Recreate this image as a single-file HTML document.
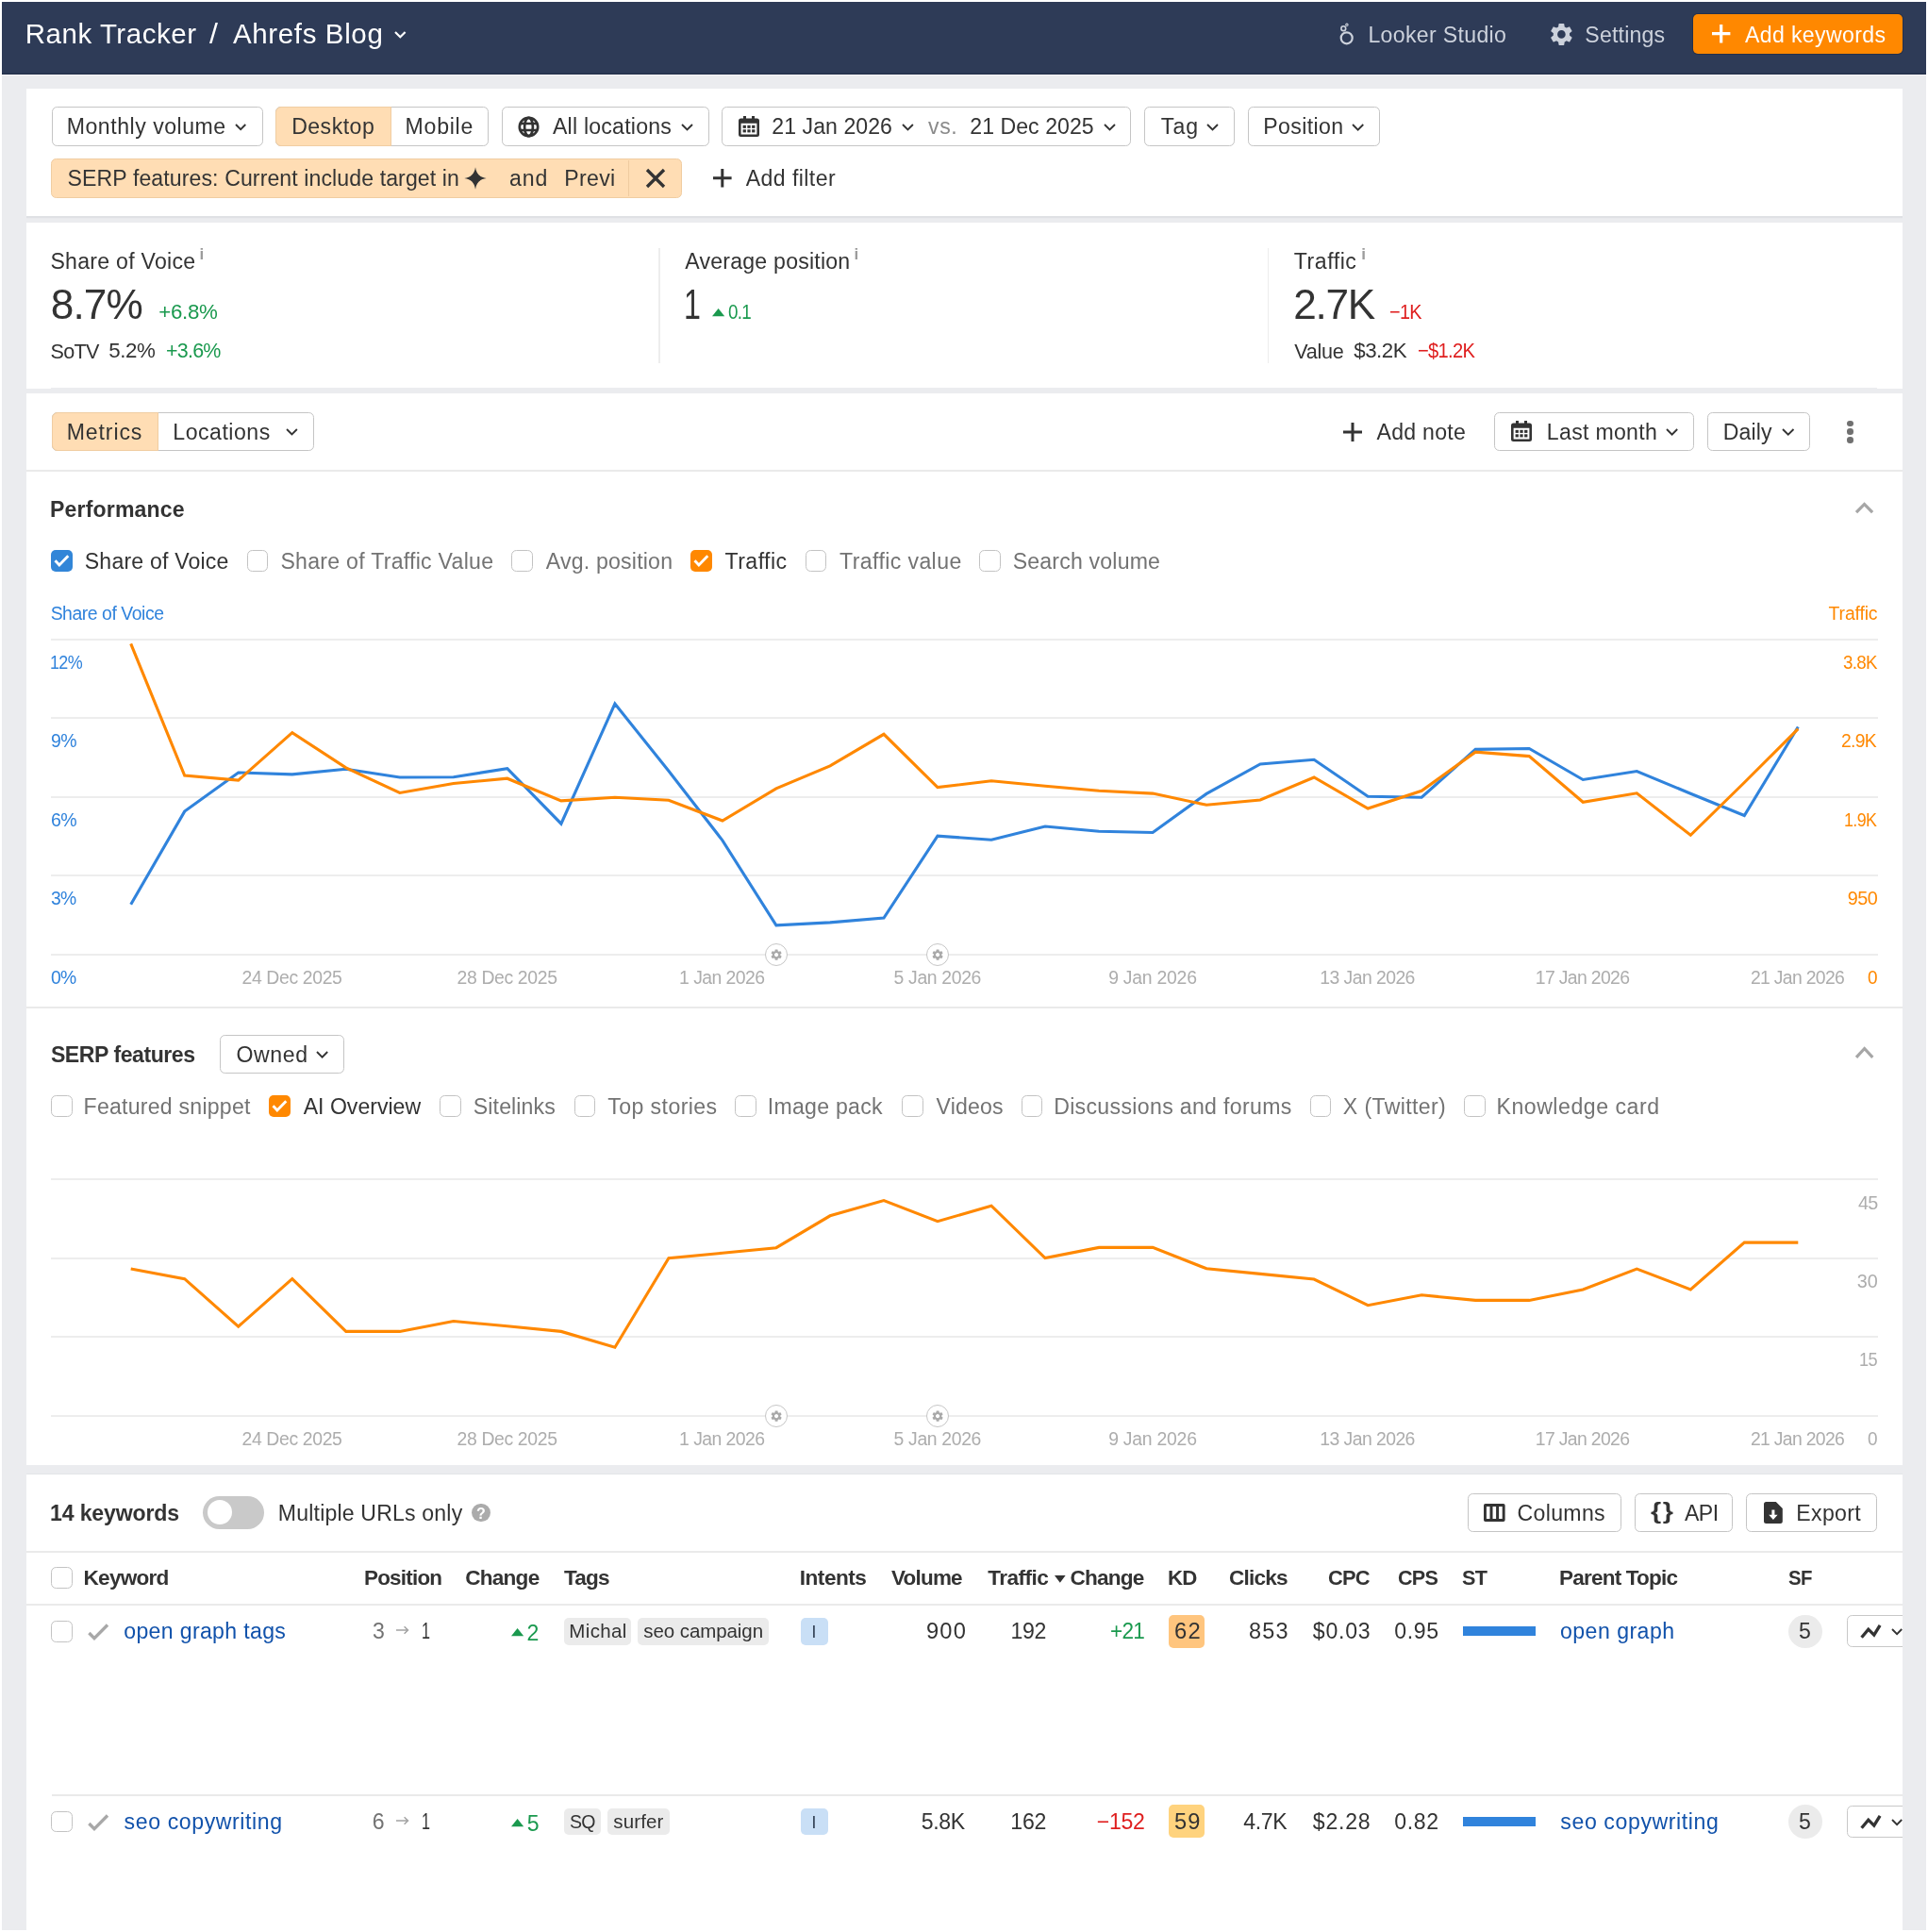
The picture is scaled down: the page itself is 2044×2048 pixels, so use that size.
<!DOCTYPE html>
<html lang="en"><head><meta charset="utf-8"><title>Rank Tracker / Ahrefs Blog</title>
<style>
html,body{margin:0;padding:0;background:#fff}
body{width:2044px;height:2048px;position:relative;overflow:hidden;font-family:"Liberation Sans",sans-serif}
#p{position:absolute;left:0;top:0;width:2044px;height:2048px;overflow:hidden;will-change:transform}
#p>div,#p>svg,#p>span{position:absolute;display:block}
#p>svg{overflow:visible}
.t{white-space:pre;line-height:1;transform-origin:0 50%}
</style></head>
<body><div id="p">
<div style="left:2.0px;top:2.0px;width:2040.0px;height:2044.0px;background:#ebecef"></div>
<div style="left:2.0px;top:2.0px;width:2040.0px;height:76.6px;background:#2e3b57;box-shadow:inset 0 -1.200px 0 #232f49"></div>
<div style="left:2.0px;top:78.6px;width:2040.0px;height:0.8px;background:#f6f6f8"></div>
<span class="t" id="t0" style="left:26.64px;top:20.73px;font-size:29.5px;color:#fff;letter-spacing:0.548px">Rank Tracker</span>
<span class="t" id="t1" style="left:222.00px;top:20.73px;font-size:29.5px;color:#fff;transform:scaleX(1.0886);letter-spacing:0.000px">/</span>
<span class="t" id="t2" style="left:247.00px;top:20.73px;font-size:29.5px;color:#fff;letter-spacing:0.630px">Ahrefs Blog</span>
<svg style="left:417.4px;top:31.9px" width="14.6" height="9.3" viewBox="0 0 14.600000000000023 9.300000000000011" ><path d="M2 2 L7.30 7.30 L12.60 2" fill="none" stroke="#fff" stroke-width="2.2" stroke-linecap="butt" stroke-linejoin="miter"/></svg>
<svg style="left:1416.0px;top:22.0px" width="24.0" height="28.0" viewBox="0 0 24 28" ><g fill="none" stroke="#cdd2dc"><circle cx="11.7" cy="18.3" r="6.0" stroke-width="2.2"/><circle cx="8.3" cy="8.2" r="2.4" stroke-width="1.6"/><circle cx="11.9" cy="4.3" r="1.2" stroke-width="1.1"/></g></svg>
<span class="t" id="t3" style="left:1450.45px;top:26.05px;font-size:23.1px;color:#cdd2dc;letter-spacing:0.332px">Looker Studio</span>
<svg style="left:1641.2px;top:22.0px" width="28.8" height="28.8" viewBox="0 0 24 24" ><path fill="#cdd2dc" d="M19.14,12.94c0.04-0.3,0.06-0.61,0.06-0.94c0-0.32-0.02-0.64-0.07-0.94l2.030-1.580c0.180-0.140,0.230-0.410,0.120-0.610 l-1.920-3.320c-0.120-0.220-0.370-0.290-0.590-0.220l-2.390,0.960c-0.500-0.380-1.030-0.700-1.620-0.940L14.400,2.810c-0.040-0.240-0.240-0.410-0.480-0.410 h-3.840c-0.240,0-0.430,0.170-0.470,0.410L9.250,5.350C8.660,5.590,8.120,5.920,7.630,6.290L5.240,5.330c-0.220-0.080-0.470,0-0.590,0.220L2.740,8.870 C2.620,9.080,2.660,9.340,2.860,9.480l2.030,1.580C4.840,11.360,4.800,11.690,4.800,12s0.020,0.640,0.070,0.940l-2.030,1.580 c-0.180,0.140-0.230,0.410-0.120,0.610l1.920,3.320c0.120,0.220,0.370,0.290,0.590,0.220l2.390-0.960c0.500,0.380,1.030,0.700,1.620,0.940l0.360,2.540 c0.050,0.240,0.240,0.410,0.480,0.410h3.840c0.240,0,0.440-0.170,0.470-0.410l0.360-2.540c0.590-0.240,1.130-0.560,1.620-0.940l2.390,0.960 c0.220,0.080,0.470,0,0.590-0.220l1.920-3.320c0.120-0.220,0.070-0.470-0.120-0.610L19.140,12.940z M12,15.600c-1.980,0-3.600-1.620-3.600-3.600 s1.620-3.600,3.600-3.600s3.600,1.620,3.600,3.600S13.980,15.600,12,15.600z"/></svg>
<span class="t" id="t4" style="left:1680.36px;top:26.05px;font-size:23.1px;color:#cdd2dc;letter-spacing:0.185px">Settings</span>
<div style="left:1794.9px;top:14.7px;width:221.9px;height:42.6px;background:#ff8800;border-radius:5px;box-shadow:0 0 0 1px rgba(20,28,50,.35)"></div>
<svg style="left:1814.6px;top:26.3px" width="19.4" height="19.4" viewBox="0 0 19.40000000000009 19.40000000000009" ><path d="M0 9.70 H19.40 M9.70 0 V19.40" stroke="#fff" stroke-width="3.2" fill="none"/></svg>
<span class="t" id="t5" style="left:1850.00px;top:26.05px;font-size:23.1px;color:#fff;letter-spacing:0.360px">Add keywords</span>
<div style="left:28.0px;top:93.5px;width:1988.5px;height:135.4px;background:#fff;box-shadow:0 2.2px 0 #dfe1e4"></div>
<div style="left:54.5px;top:113.3px;width:224.0px;height:41.5px;border:1.7px solid #c5c5c5;border-radius:5.5px;background:#fff;box-sizing:border-box;"></div>
<span class="t" id="t6" style="left:70.75px;top:123.25px;font-size:23.1px;color:#333333;letter-spacing:0.513px">Monthly volume</span>
<svg style="left:248.0px;top:130.2px" width="14.3" height="9.2" viewBox="0 0 14.300000000000011 9.150000000000006" ><path d="M2 2 L7.15 7.15 L12.30 2" fill="none" stroke="#333333" stroke-width="1.9" stroke-linecap="butt" stroke-linejoin="miter"/></svg>
<div style="left:292.3px;top:113.3px;width:226.2px;height:41.5px;border:1.7px solid #c5c5c5;border-radius:5.5px;background:#fff;box-sizing:border-box;"></div>
<div style="left:292.3px;top:113.3px;width:122.3px;height:41.5px;background:#ffddb4;border:1.7px solid #f0cda2;box-sizing:border-box;border-radius:6px 0 0 6px"></div>
<span class="t" id="t7" style="left:309.15px;top:123.25px;font-size:23.1px;color:#333333;letter-spacing:0.480px">Desktop</span>
<span class="t" id="t8" style="left:429.55px;top:123.25px;font-size:23.1px;color:#333333;letter-spacing:0.754px">Mobile</span>
<div style="left:532.0px;top:113.3px;width:219.6px;height:41.5px;border:1.7px solid #c5c5c5;border-radius:5.5px;background:#fff;box-sizing:border-box;"></div>
<svg style="left:549.2px;top:123.3px" width="23.0" height="23.0" viewBox="0 0 23 23" ><g fill="none" stroke="#333" stroke-width="2.7"><circle cx="11.5" cy="11.5" r="9.7"/><ellipse cx="11.5" cy="11.5" rx="4.4" ry="9.7"/><path d="M2.200 8h18.600M2.200 15h18.600"/></g></svg>
<span class="t" id="t9" style="left:586.00px;top:123.25px;font-size:23.1px;color:#333333;letter-spacing:0.215px">All locations</span>
<svg style="left:720.6px;top:130.1px" width="15.0" height="9.5" viewBox="0 0 15.0 9.5" ><path d="M2 2 L7.50 7.50 L13.00 2" fill="none" stroke="#333333" stroke-width="1.9" stroke-linecap="butt" stroke-linejoin="miter"/></svg>
<div style="left:765.4px;top:113.3px;width:433.9px;height:41.5px;border:1.7px solid #c5c5c5;border-radius:5.5px;background:#fff;box-sizing:border-box;"></div>
<svg style="left:783.0px;top:122.8px" width="22.0" height="22.0" viewBox="0 0 22 22" ><path fill="#333333" fill-rule="evenodd" d="M5 0h3v2.5h6V0h3v2.5h2.5A2.5 2.5 0 0 1 22 5v14.5a2.5 2.5 0 0 1-2.5 2.5h-17A2.5 2.5 0 0 1 0 19.500V5a2.5 2.500 0 0 1 2.5-2.5H5z M2.600 7.800v11.600h16.800V7.800z"/><g fill="#333333"><rect x="4.600" y="9.800" width="3.300" height="3.100"/><rect x="9.350" y="9.800" width="3.300" height="3.100"/><rect x="14.100" y="9.800" width="3.300" height="3.100"/><rect x="4.600" y="14.300" width="3.300" height="3.100"/><rect x="9.350" y="14.300" width="3.300" height="3.100"/><rect x="14.100" y="14.300" width="3.300" height="3.100"/></g></svg>
<span class="t" id="t10" style="left:818.35px;top:123.25px;font-size:23.1px;color:#333333;letter-spacing:0.047px">21 Jan 2026</span>
<svg style="left:954.8px;top:130.1px" width="14.9" height="9.5" viewBox="0 0 14.900000000000091 9.450000000000045" ><path d="M2 2 L7.45 7.45 L12.90 2" fill="none" stroke="#333333" stroke-width="1.9" stroke-linecap="butt" stroke-linejoin="miter"/></svg>
<span class="t" id="t11" style="left:984.00px;top:123.25px;font-size:23.1px;color:#8a8a8a;letter-spacing:0.606px">vs.</span>
<span class="t" id="t12" style="left:1028.25px;top:123.25px;font-size:23.1px;color:#333333;letter-spacing:0.044px">21 Dec 2025</span>
<svg style="left:1168.5px;top:130.1px" width="15.0" height="9.5" viewBox="0 0 15.0 9.5" ><path d="M2 2 L7.50 7.50 L13.00 2" fill="none" stroke="#333333" stroke-width="1.9" stroke-linecap="butt" stroke-linejoin="miter"/></svg>
<div style="left:1213.2px;top:113.3px;width:95.8px;height:41.5px;border:1.7px solid #c5c5c5;border-radius:5.5px;background:#fff;box-sizing:border-box;"></div>
<span class="t" id="t13" style="left:1230.84px;top:123.25px;font-size:23.1px;color:#333333;letter-spacing:1.020px">Tag</span>
<svg style="left:1278.0px;top:130.1px" width="15.0" height="9.5" viewBox="0 0 15 9.5" ><path d="M2 2 L7.50 7.50 L13.00 2" fill="none" stroke="#333333" stroke-width="1.9" stroke-linecap="butt" stroke-linejoin="miter"/></svg>
<div style="left:1322.8px;top:113.3px;width:140.6px;height:41.5px;border:1.7px solid #c5c5c5;border-radius:5.5px;background:#fff;box-sizing:border-box;"></div>
<span class="t" id="t14" style="left:1339.15px;top:123.25px;font-size:23.1px;color:#333333;letter-spacing:0.398px">Position</span>
<svg style="left:1432.0px;top:130.0px" width="15.3" height="9.6" viewBox="0 0 15.299999999999955 9.649999999999977" ><path d="M2 2 L7.65 7.65 L13.30 2" fill="none" stroke="#333333" stroke-width="1.9" stroke-linecap="butt" stroke-linejoin="miter"/></svg>
<div style="left:54.3px;top:168.2px;width:669.0px;height:41.4px;background:#ffddb4;border:1.7px solid #f0cda2;box-sizing:border-box;border-radius:5.5px"></div>
<div style="left:665.8px;top:169.5px;width:1.6px;height:38.5px;background:#efcba0"></div>
<span class="t" id="t15" style="left:71.56px;top:178.25px;font-size:23.1px;color:#333333;letter-spacing:0.095px">SERP features: Current include target in</span>
<svg style="left:491.5px;top:177.0px" width="24.0" height="24.0" viewBox="0 0 24 24" ><path fill="#333" d="M12 0.300 C12.900 7.200 16.800 11.100 23.700 12 C16.800 12.900 12.900 16.800 12 23.700 C11.100 16.800 7.200 12.900 0.300 12 C7.200 11.100 11.100 7.200 12 0.300Z"/></svg>
<span class="t" id="t16" style="left:540.08px;top:178.25px;font-size:23.1px;color:#333333;letter-spacing:0.903px">and</span>
<span class="t" id="t17" style="left:598.15px;top:178.25px;font-size:23.1px;color:#333333;letter-spacing:0.369px">Previ</span>
<svg style="left:684.0px;top:178.0px" width="22.0" height="22.0" viewBox="0 0 22 22" ><path d="M2 2 L20 20 M20 2 L2 20" stroke="#333" stroke-width="3.3" fill="none"/></svg>
<svg style="left:756.4px;top:179.2px" width="19.6" height="19.6" viewBox="0 0 19.600000000000023 19.600000000000023" ><path d="M0 9.80 H19.60 M9.80 0 V19.60" stroke="#333333" stroke-width="3.0" fill="none"/></svg>
<span class="t" id="t18" style="left:790.80px;top:178.25px;font-size:23.1px;color:#333333;letter-spacing:0.407px">Add filter</span>
<div style="left:28.0px;top:236.3px;width:1988.5px;height:175.9px;background:#fff"></div>
<div style="left:54.3px;top:410.9px;width:1936.2px;height:1.3px;background:#ebecef"></div>
<span class="t" id="t19" style="left:53.46px;top:266.15px;font-size:23.1px;color:#333333;letter-spacing:0.267px">Share of Voice</span>
<span class="t" id="t20" style="left:211.50px;top:261.01px;font-size:17px;color:#9c9c9c;font-weight:700;letter-spacing:0.000px">i</span>
<span class="t" id="t21" style="left:53.73px;top:301.38px;font-size:44.2px;color:#333333;letter-spacing:-0.881px">8.7%</span>
<span class="t" id="t22" style="left:168.20px;top:319.92px;font-size:22.3px;color:#1a994e;letter-spacing:-0.270px">+6.8%</span>
<span class="t" id="t23" style="left:53.53px;top:361.52px;font-size:21.6px;color:#333333;letter-spacing:-0.733px">SoTV</span>
<span class="t" id="t24" style="left:115.31px;top:360.92px;font-size:22.3px;color:#333333;letter-spacing:-0.425px">5.2%</span>
<span class="t" id="t25" style="left:175.83px;top:360.92px;font-size:22.3px;color:#1a994e;transform:scaleX(0.9617);letter-spacing:-0.781px">+3.6%</span>
<div style="left:698.0px;top:262.5px;width:1.6px;height:122.0px;background:#ededed"></div>
<span class="t" id="t26" style="left:726.30px;top:266.15px;font-size:23.1px;color:#333333;letter-spacing:0.219px">Average position</span>
<span class="t" id="t27" style="left:905.60px;top:261.01px;font-size:17px;color:#9c9c9c;font-weight:700;letter-spacing:0.000px">i</span>
<span class="t" id="t28" style="left:724.59px;top:301.38px;font-size:44.2px;color:#333333;transform:scaleX(0.7283);letter-spacing:0.000px">1</span>
<svg style="left:755.3px;top:327.0px" width="13.2" height="8.2" viewBox="0 0 13.2 8.2" ><path d="M0 8.200 L6.600 0 L13.200 8.200Z" fill="#1a994e"/></svg>
<span class="t" id="t29" style="left:772.04px;top:319.92px;font-size:22.3px;color:#1a994e;transform:scaleX(0.8433);letter-spacing:-0.781px">0.1</span>
<div style="left:1343.7px;top:262.5px;width:1.6px;height:122.0px;background:#ededed"></div>
<span class="t" id="t30" style="left:1371.84px;top:266.15px;font-size:23.1px;color:#333333;letter-spacing:0.525px">Traffic</span>
<span class="t" id="t31" style="left:1443.30px;top:261.01px;font-size:17px;color:#9c9c9c;font-weight:700;letter-spacing:0.000px">i</span>
<span class="t" id="t32" style="left:1371.29px;top:301.38px;font-size:44.2px;color:#333333;letter-spacing:-1.295px">2.7K</span>
<span class="t" id="t33" style="left:1473.11px;top:319.92px;font-size:22.3px;color:#df1f1f;transform:scaleX(0.8889);letter-spacing:-0.781px">−1K</span>
<span class="t" id="t34" style="left:1372.30px;top:361.52px;font-size:21.6px;color:#333333;letter-spacing:-0.288px">Value</span>
<span class="t" id="t35" style="left:1435.28px;top:360.92px;font-size:22.3px;color:#333333;letter-spacing:-0.500px">$3.2K</span>
<span class="t" id="t36" style="left:1502.89px;top:360.92px;font-size:22.3px;color:#df1f1f;transform:scaleX(0.9044);letter-spacing:-0.781px">−$1.2K</span>
<div style="left:28.0px;top:416.8px;width:1988.5px;height:1135.8px;background:#fff"></div>
<div style="left:54.5px;top:436.6px;width:278.1px;height:41.4px;border:1.7px solid #c5c5c5;border-radius:5.5px;background:#fff;box-sizing:border-box;"></div>
<div style="left:54.5px;top:436.6px;width:113.1px;height:41.4px;background:#ffddb4;border:1.7px solid #f0cda2;box-sizing:border-box;border-radius:6px 0 0 6px"></div>
<span class="t" id="t37" style="left:70.75px;top:446.55px;font-size:23.1px;color:#333333;letter-spacing:0.872px">Metrics</span>
<span class="t" id="t38" style="left:183.35px;top:446.55px;font-size:23.1px;color:#333333;letter-spacing:0.500px">Locations</span>
<svg style="left:301.6px;top:453.1px" width="14.9" height="9.4" viewBox="0 0 14.899999999999977 9.449999999999989" ><path d="M2 2 L7.45 7.45 L12.90 2" fill="none" stroke="#333333" stroke-width="1.9" stroke-linecap="butt" stroke-linejoin="miter"/></svg>
<svg style="left:1423.9px;top:447.6px" width="20.0" height="20.0" viewBox="0 0 20.0 20.0" ><path d="M0 10.00 H20.00 M10.00 0 V20.00" stroke="#333333" stroke-width="3.0" fill="none"/></svg>
<span class="t" id="t39" style="left:1459.50px;top:446.55px;font-size:23.1px;color:#333333;letter-spacing:0.255px">Add note</span>
<div style="left:1584.4px;top:436.6px;width:212.0px;height:41.4px;border:1.7px solid #c5c5c5;border-radius:5.5px;background:#fff;box-sizing:border-box;"></div>
<svg style="left:1601.8px;top:446.0px" width="22.0" height="22.0" viewBox="0 0 22 22" ><path fill="#333333" fill-rule="evenodd" d="M5 0h3v2.5h6V0h3v2.5h2.5A2.5 2.5 0 0 1 22 5v14.5a2.5 2.5 0 0 1-2.5 2.5h-17A2.5 2.5 0 0 1 0 19.500V5a2.5 2.500 0 0 1 2.5-2.5H5z M2.600 7.800v11.600h16.800V7.800z"/><g fill="#333333"><rect x="4.600" y="9.800" width="3.300" height="3.100"/><rect x="9.350" y="9.800" width="3.300" height="3.100"/><rect x="14.100" y="9.800" width="3.300" height="3.100"/><rect x="4.600" y="14.300" width="3.300" height="3.100"/><rect x="9.350" y="14.300" width="3.300" height="3.100"/><rect x="14.100" y="14.300" width="3.300" height="3.100"/></g></svg>
<span class="t" id="t40" style="left:1639.85px;top:446.55px;font-size:23.1px;color:#333333;letter-spacing:0.299px">Last month</span>
<svg style="left:1765.4px;top:453.0px" width="15.2" height="9.6" viewBox="0 0 15.199999999999818 9.599999999999909" ><path d="M2 2 L7.60 7.60 L13.20 2" fill="none" stroke="#333333" stroke-width="1.9" stroke-linecap="butt" stroke-linejoin="miter"/></svg>
<div style="left:1810.2px;top:436.6px;width:109.0px;height:41.4px;border:1.7px solid #c5c5c5;border-radius:5.5px;background:#fff;box-sizing:border-box;"></div>
<span class="t" id="t41" style="left:1826.85px;top:446.55px;font-size:23.1px;color:#333333;letter-spacing:0.076px">Daily</span>
<svg style="left:1887.7px;top:452.9px" width="15.5" height="9.8" viewBox="0 0 15.5 9.75" ><path d="M2 2 L7.75 7.75 L13.50 2" fill="none" stroke="#333333" stroke-width="1.9" stroke-linecap="butt" stroke-linejoin="miter"/></svg>
<div style="left:1958.0px;top:445.5px;width:6.6px;height:6.6px;background:#707070;border-radius:50%"></div>
<div style="left:1958.0px;top:454.3px;width:6.6px;height:6.6px;background:#707070;border-radius:50%"></div>
<div style="left:1958.0px;top:463.1px;width:6.6px;height:6.6px;background:#707070;border-radius:50%"></div>
<div style="left:28.0px;top:497.5px;width:1988.5px;height:2.0px;background:#eaeaea"></div>
<span class="t" id="t42" style="left:53.00px;top:529.05px;font-size:23.1px;color:#333333;font-weight:700;letter-spacing:0.152px">Performance</span>
<svg style="left:1963.6px;top:530.0px" width="25.1" height="17.2" viewBox="0 0 25.100000000000136 17.200000000000045" ><path d="M4 13.20 L12.55 4.5 L21.10 13.20" fill="none" stroke="#a6a6a6" stroke-width="3.2" stroke-linejoin="miter"/></svg>
<div style="left:54.2px;top:583.3px;width:22.8px;height:22.8px;border-radius:5px;background:#3286d8"></div>
<svg style="left:54.2px;top:583.3px" width="22.8" height="22.8" viewBox="0 0 22.8 22.8" ><path d="M4.5 11.3 L8.900 15.9 L18.300 6.300" fill="none" stroke="#fff" stroke-width="2.9" stroke-linejoin="miter"/></svg>
<span class="t" id="t43" style="left:89.76px;top:584.45px;font-size:23.1px;color:#333333;letter-spacing:0.190px">Share of Voice</span>
<div style="left:261.5px;top:583.3px;width:22.8px;height:22.8px;border:1.7px solid #c3c3c3;border-radius:5.5px;background:#fff;box-sizing:border-box"></div>
<span class="t" id="t44" style="left:297.46px;top:584.45px;font-size:23.1px;color:#737373;letter-spacing:0.268px">Share of Traffic Value</span>
<div style="left:542.1px;top:583.3px;width:22.8px;height:22.8px;border:1.7px solid #c3c3c3;border-radius:5.5px;background:#fff;box-sizing:border-box"></div>
<span class="t" id="t45" style="left:578.80px;top:584.45px;font-size:23.1px;color:#737373;letter-spacing:0.200px">Avg. position</span>
<div style="left:731.8px;top:583.3px;width:22.8px;height:22.8px;border-radius:5px;background:#ff8800"></div>
<svg style="left:731.8px;top:583.3px" width="22.8" height="22.8" viewBox="0 0 22.8 22.8" ><path d="M4.5 11.3 L8.900 15.9 L18.300 6.300" fill="none" stroke="#fff" stroke-width="2.9" stroke-linejoin="miter"/></svg>
<span class="t" id="t46" style="left:768.44px;top:584.45px;font-size:23.1px;color:#333333;letter-spacing:0.475px">Traffic</span>
<div style="left:853.7px;top:583.3px;width:22.8px;height:22.8px;border:1.7px solid #c3c3c3;border-radius:5.5px;background:#fff;box-sizing:border-box"></div>
<span class="t" id="t47" style="left:890.04px;top:584.45px;font-size:23.1px;color:#737373;letter-spacing:0.391px">Traffic value</span>
<div style="left:1038.4px;top:583.3px;width:22.8px;height:22.8px;border:1.7px solid #c3c3c3;border-radius:5.5px;background:#fff;box-sizing:border-box"></div>
<span class="t" id="t48" style="left:1073.66px;top:584.45px;font-size:23.1px;color:#737373;letter-spacing:0.187px">Search volume</span>
<span class="t" id="t49" style="left:53.63px;top:640.68px;font-size:19.4px;color:#3083dc;letter-spacing:-0.443px">Share of Voice</span>
<span class="t" id="t50" style="left:1938.61px;top:640.68px;font-size:19.4px;color:#ff8800;letter-spacing:-0.154px">Traffic</span>
<div style="left:54.2px;top:676.9px;width:1936.6px;height:2.0px;background:#ededed"></div>
<div style="left:54.2px;top:760.3px;width:1936.6px;height:2.0px;background:#ededed"></div>
<div style="left:54.2px;top:843.8px;width:1936.6px;height:2.0px;background:#ededed"></div>
<div style="left:54.2px;top:927.2px;width:1936.6px;height:2.0px;background:#ededed"></div>
<div style="left:54.2px;top:1010.6px;width:1936.6px;height:2.0px;background:#ededed"></div>
<span class="t" id="t51" style="left:53.25px;top:692.99px;font-size:19.8px;color:#3083dc;transform:scaleX(0.9072);letter-spacing:-0.693px">12%</span>
<span class="t" id="t52" style="left:53.72px;top:776.44px;font-size:19.8px;color:#3083dc;transform:scaleX(0.9835);letter-spacing:-0.693px">9%</span>
<span class="t" id="t53" style="left:53.62px;top:859.89px;font-size:19.8px;color:#3083dc;transform:scaleX(0.9872);letter-spacing:-0.693px">6%</span>
<span class="t" id="t54" style="left:53.92px;top:943.34px;font-size:19.8px;color:#3083dc;transform:scaleX(0.9762);letter-spacing:-0.693px">3%</span>
<span class="t" id="t55" style="left:53.92px;top:1026.79px;font-size:19.8px;color:#3083dc;transform:scaleX(0.9762);letter-spacing:-0.693px">0%</span>
<span class="t" id="t56" style="left:1953.54px;top:692.99px;font-size:19.8px;color:#ff8800;transform:scaleX(0.9473);letter-spacing:-0.693px">3.8K</span>
<span class="t" id="t57" style="left:1952.43px;top:776.44px;font-size:19.8px;color:#ff8800;transform:scaleX(0.9761);letter-spacing:-0.693px">2.9K</span>
<span class="t" id="t58" style="left:1955.26px;top:859.89px;font-size:19.8px;color:#ff8800;transform:scaleX(0.9027);letter-spacing:-0.693px">1.9K</span>
<span class="t" id="t59" style="left:1958.81px;top:943.34px;font-size:19.8px;color:#ff8800;letter-spacing:-0.554px">950</span>
<span class="t" id="t60" style="left:1980.14px;top:1026.79px;font-size:19.8px;color:#ff8800;transform:scaleX(0.9577);letter-spacing:0.000px">0</span>
<span class="t" id="t61" style="left:256.49px;top:1027.13px;font-size:19.4px;color:#adadad;letter-spacing:-0.360px">24 Dec 2025</span>
<span class="t" id="t62" style="left:484.57px;top:1027.13px;font-size:19.4px;color:#adadad;letter-spacing:-0.360px">28 Dec 2025</span>
<span class="t" id="t63" style="left:720.12px;top:1027.13px;font-size:19.4px;color:#adadad;letter-spacing:-0.557px">1 Jan 2026</span>
<span class="t" id="t64" style="left:947.62px;top:1027.13px;font-size:19.4px;color:#adadad;letter-spacing:-0.355px">5 Jan 2026</span>
<span class="t" id="t65" style="left:1175.16px;top:1027.13px;font-size:19.4px;color:#adadad;letter-spacing:-0.244px">9 Jan 2026</span>
<span class="t" id="t66" style="left:1399.26px;top:1027.13px;font-size:19.4px;color:#adadad;letter-spacing:-0.560px">13 Jan 2026</span>
<span class="t" id="t67" style="left:1627.79px;top:1027.13px;font-size:19.4px;color:#adadad;letter-spacing:-0.650px">17 Jan 2026</span>
<span class="t" id="t68" style="left:1856.35px;top:1027.13px;font-size:19.4px;color:#adadad;transform:scaleX(0.9981);letter-spacing:-0.679px">21 Jan 2026</span>
<svg style="left:0.0px;top:660.0px" width="2044.0" height="400.0" viewBox="0 0 2044 400" ><polyline points="138.7,298.8 195.7,200.1 252.7,159.0 309.8,160.9 366.8,155.3 423.8,164.0 480.8,163.7 537.8,154.7 594.9,213.2 651.9,86.0 708.9,157.3 765.9,230.8 822.9,320.8 880.0,317.9 937.0,313.1 994.0,226.2 1051.0,230.3 1108.0,216.0 1165.1,221.3 1222.1,222.5 1279.1,181.4 1336.1,150.0 1393.1,145.3 1450.2,184.2 1507.2,185.2 1564.2,134.4 1621.2,133.5 1678.2,166.5 1735.3,157.5 1792.3,181.2 1849.3,204.5 1906.3,110.5" fill="none" stroke="#3083dc" stroke-width="3.1" stroke-linejoin="miter" stroke-linecap="butt"/><polyline points="138.7,22.4 195.7,162.1 252.7,167.1 309.8,116.7 366.8,153.8 423.8,180.5 480.8,170.5 537.8,165.2 594.9,188.9 651.9,185.2 708.9,188.3 765.9,210.0 822.9,175.8 880.0,151.9 937.0,118.3 994.0,174.6 1051.0,167.7 1108.0,173.3 1165.1,178.3 1222.1,181.1 1279.1,193.3 1336.1,188.0 1393.1,164.0 1450.2,197.0 1507.2,178.3 1564.2,137.2 1621.2,141.6 1678.2,190.3 1735.3,180.8 1792.3,225.3 1849.3,169.5 1906.3,112.7" fill="none" stroke="#ff8800" stroke-width="3.1" stroke-linejoin="miter" stroke-linecap="butt"/></svg>
<div style="left:810.9px;top:999.7px;width:24.0px;height:24.0px;background:#fff;border:1.9px solid #c6c6c6;border-radius:50%;box-sizing:border-box"></div>
<svg style="left:815.8px;top:1004.6px" width="14.2" height="14.2" viewBox="0 0 24 24" ><path fill="#a9a9a9" d="M19.14,12.94c0.04-0.3,0.06-0.61,0.06-0.94c0-0.32-0.02-0.64-0.07-0.94l2.030-1.580c0.180-0.140,0.230-0.410,0.120-0.610 l-1.920-3.320c-0.120-0.220-0.370-0.290-0.590-0.220l-2.390,0.960c-0.500-0.380-1.030-0.700-1.620-0.940L14.400,2.810c-0.040-0.240-0.240-0.410-0.480-0.410 h-3.840c-0.240,0-0.430,0.170-0.470,0.410L9.250,5.350C8.660,5.590,8.120,5.920,7.630,6.290L5.240,5.330c-0.220-0.080-0.470,0-0.590,0.220L2.740,8.870 C2.620,9.080,2.660,9.340,2.860,9.480l2.030,1.580C4.840,11.360,4.800,11.690,4.800,12s0.020,0.640,0.070,0.940l-2.030,1.580 c-0.180,0.140-0.230,0.410-0.120,0.610l1.920,3.320c0.120,0.220,0.370,0.290,0.590,0.220l2.390-0.960c0.500,0.380,1.030,0.700,1.620,0.940l0.360,2.540 c0.050,0.240,0.240,0.410,0.480,0.410h3.840c0.240,0,0.440-0.170,0.470-0.410l0.360-2.540c0.590-0.240,1.130-0.560,1.620-0.940l2.390,0.960 c0.220,0.080,0.470,0,0.590-0.220l1.920-3.320c0.120-0.220,0.070-0.470-0.120-0.610L19.140,12.940z M12,15.600c-1.980,0-3.600-1.620-3.600-3.600 s1.620-3.600,3.600-3.600s3.600,1.620,3.600,3.600S13.980,15.600,12,15.600z"/></svg>
<div style="left:982.0px;top:999.7px;width:24.0px;height:24.0px;background:#fff;border:1.9px solid #c6c6c6;border-radius:50%;box-sizing:border-box"></div>
<svg style="left:986.9px;top:1004.6px" width="14.2" height="14.2" viewBox="0 0 24 24" ><path fill="#a9a9a9" d="M19.14,12.94c0.04-0.3,0.06-0.61,0.06-0.94c0-0.32-0.02-0.64-0.07-0.94l2.030-1.580c0.180-0.140,0.230-0.410,0.120-0.610 l-1.920-3.320c-0.120-0.220-0.370-0.290-0.590-0.220l-2.390,0.960c-0.500-0.380-1.030-0.700-1.620-0.940L14.400,2.810c-0.040-0.240-0.240-0.410-0.480-0.410 h-3.840c-0.240,0-0.430,0.170-0.470,0.410L9.250,5.350C8.660,5.590,8.120,5.920,7.630,6.290L5.240,5.330c-0.220-0.080-0.470,0-0.590,0.220L2.740,8.870 C2.620,9.080,2.660,9.340,2.860,9.480l2.030,1.580C4.840,11.360,4.800,11.690,4.800,12s0.020,0.640,0.070,0.940l-2.030,1.580 c-0.180,0.140-0.230,0.410-0.120,0.610l1.920,3.320c0.120,0.220,0.370,0.290,0.590,0.220l2.390-0.960c0.500,0.380,1.030,0.700,1.620,0.940l0.360,2.540 c0.050,0.240,0.240,0.410,0.480,0.410h3.840c0.240,0,0.440-0.170,0.470-0.410l0.360-2.540c0.590-0.240,1.130-0.560,1.620-0.940l2.390,0.960 c0.220,0.080,0.470,0,0.590-0.220l1.920-3.320c0.120-0.220,0.070-0.470-0.120-0.610L19.140,12.940z M12,15.600c-1.980,0-3.600-1.620-3.600-3.600 s1.620-3.600,3.600-3.600s3.600,1.620,3.600,3.600S13.980,15.600,12,15.600z"/></svg>
<div style="left:28.0px;top:1067.3px;width:1988.5px;height:2.0px;background:#eaeaea"></div>
<span class="t" id="t69" style="left:53.92px;top:1106.95px;font-size:23.1px;color:#333333;font-weight:700;letter-spacing:-0.470px">SERP features</span>
<div style="left:232.8px;top:1097.2px;width:132.1px;height:40.8px;border:1.7px solid #c5c5c5;border-radius:5.5px;background:#fff;box-sizing:border-box;"></div>
<span class="t" id="t70" style="left:250.46px;top:1107.05px;font-size:23.1px;color:#333333;letter-spacing:0.595px">Owned</span>
<svg style="left:333.9px;top:1113.1px" width="15.2" height="9.6" viewBox="0 0 15.200000000000045 9.600000000000023" ><path d="M2 2 L7.60 7.60 L13.20 2" fill="none" stroke="#333333" stroke-width="1.9" stroke-linecap="butt" stroke-linejoin="miter"/></svg>
<svg style="left:1963.6px;top:1107.4px" width="25.3" height="17.8" viewBox="0 0 25.300000000000182 17.799999999999955" ><path d="M4 13.80 L12.65 4.5 L21.30 13.80" fill="none" stroke="#a6a6a6" stroke-width="3.2" stroke-linejoin="miter"/></svg>
<div style="left:54.2px;top:1161.1px;width:22.8px;height:22.8px;border:1.7px solid #c3c3c3;border-radius:5.5px;background:#fff;box-sizing:border-box"></div>
<span class="t" id="t71" style="left:88.55px;top:1162.35px;font-size:23.1px;color:#737373;letter-spacing:0.239px">Featured snippet</span>
<div style="left:284.8px;top:1161.1px;width:22.8px;height:22.8px;border-radius:5px;background:#ff8800"></div>
<svg style="left:284.8px;top:1161.1px" width="22.8" height="22.8" viewBox="0 0 22.8 22.8" ><path d="M4.5 11.3 L8.900 15.9 L18.300 6.300" fill="none" stroke="#fff" stroke-width="2.9" stroke-linejoin="miter"/></svg>
<span class="t" id="t72" style="left:321.70px;top:1162.35px;font-size:23.1px;color:#333333;letter-spacing:-0.006px">AI Overview</span>
<div style="left:466.3px;top:1161.1px;width:22.8px;height:22.8px;border:1.7px solid #c3c3c3;border-radius:5.5px;background:#fff;box-sizing:border-box"></div>
<span class="t" id="t73" style="left:501.86px;top:1162.35px;font-size:23.1px;color:#737373;letter-spacing:0.106px">Sitelinks</span>
<div style="left:608.5px;top:1161.1px;width:22.8px;height:22.8px;border:1.7px solid #c3c3c3;border-radius:5.5px;background:#fff;box-sizing:border-box"></div>
<span class="t" id="t74" style="left:644.34px;top:1162.35px;font-size:23.1px;color:#737373;letter-spacing:0.410px">Top stories</span>
<div style="left:779.4px;top:1161.1px;width:22.8px;height:22.8px;border:1.7px solid #c3c3c3;border-radius:5.5px;background:#fff;box-sizing:border-box"></div>
<span class="t" id="t75" style="left:813.72px;top:1162.35px;font-size:23.1px;color:#737373;letter-spacing:0.275px">Image pack</span>
<div style="left:956.1px;top:1161.1px;width:22.8px;height:22.8px;border:1.7px solid #c3c3c3;border-radius:5.5px;background:#fff;box-sizing:border-box"></div>
<span class="t" id="t76" style="left:992.50px;top:1162.35px;font-size:23.1px;color:#737373;letter-spacing:0.161px">Videos</span>
<div style="left:1082.7px;top:1161.1px;width:22.8px;height:22.8px;border:1.7px solid #c3c3c3;border-radius:5.5px;background:#fff;box-sizing:border-box"></div>
<span class="t" id="t77" style="left:1117.15px;top:1162.35px;font-size:23.1px;color:#737373;letter-spacing:0.333px">Discussions and forums</span>
<div style="left:1388.7px;top:1161.1px;width:22.8px;height:22.8px;border:1.7px solid #c3c3c3;border-radius:5.5px;background:#fff;box-sizing:border-box"></div>
<span class="t" id="t78" style="left:1423.84px;top:1162.35px;font-size:23.1px;color:#737373;letter-spacing:0.378px">X (Twitter)</span>
<div style="left:1551.8px;top:1161.1px;width:22.8px;height:22.8px;border:1.7px solid #c3c3c3;border-radius:5.5px;background:#fff;box-sizing:border-box"></div>
<span class="t" id="t79" style="left:1586.45px;top:1162.35px;font-size:23.1px;color:#737373;letter-spacing:0.541px">Knowledge card</span>
<div style="left:54.2px;top:1249.4px;width:1936.6px;height:2.0px;background:#ededed"></div>
<div style="left:54.2px;top:1332.8px;width:1936.6px;height:2.0px;background:#ededed"></div>
<div style="left:54.2px;top:1416.3px;width:1936.6px;height:2.0px;background:#ededed"></div>
<div style="left:54.2px;top:1499.8px;width:1936.6px;height:2.0px;background:#ededed"></div>
<span class="t" id="t80" style="left:1969.50px;top:1265.54px;font-size:19.8px;color:#adadad;transform:scaleX(0.9994);letter-spacing:-0.693px">45</span>
<span class="t" id="t81" style="left:1968.81px;top:1348.99px;font-size:19.8px;color:#adadad;letter-spacing:-0.106px">30</span>
<span class="t" id="t82" style="left:1971.13px;top:1432.44px;font-size:19.8px;color:#adadad;transform:scaleX(0.9200);letter-spacing:-0.693px">15</span>
<span class="t" id="t83" style="left:1980.14px;top:1515.89px;font-size:19.8px;color:#adadad;transform:scaleX(0.9577);letter-spacing:0.000px">0</span>
<span class="t" id="t84" style="left:256.49px;top:1516.23px;font-size:19.4px;color:#adadad;letter-spacing:-0.360px">24 Dec 2025</span>
<span class="t" id="t85" style="left:484.57px;top:1516.23px;font-size:19.4px;color:#adadad;letter-spacing:-0.360px">28 Dec 2025</span>
<span class="t" id="t86" style="left:720.12px;top:1516.23px;font-size:19.4px;color:#adadad;letter-spacing:-0.557px">1 Jan 2026</span>
<span class="t" id="t87" style="left:947.62px;top:1516.23px;font-size:19.4px;color:#adadad;letter-spacing:-0.355px">5 Jan 2026</span>
<span class="t" id="t88" style="left:1175.16px;top:1516.23px;font-size:19.4px;color:#adadad;letter-spacing:-0.244px">9 Jan 2026</span>
<span class="t" id="t89" style="left:1399.26px;top:1516.23px;font-size:19.4px;color:#adadad;letter-spacing:-0.560px">13 Jan 2026</span>
<span class="t" id="t90" style="left:1627.79px;top:1516.23px;font-size:19.4px;color:#adadad;letter-spacing:-0.650px">17 Jan 2026</span>
<span class="t" id="t91" style="left:1856.35px;top:1516.23px;font-size:19.4px;color:#adadad;transform:scaleX(0.9981);letter-spacing:-0.679px">21 Jan 2026</span>
<svg style="left:0.0px;top:1230.0px" width="2044.0" height="330.0" viewBox="0 0 2044 330" ><polyline points="138.7,115.1 195.7,125.7 252.7,176.1 309.8,125.7 366.8,181.4 423.8,181.4 480.8,170.5 537.8,175.8 594.9,181.4 651.9,198.2 708.9,103.6 765.9,98.3 822.9,92.7 880.0,58.8 937.0,42.6 994.0,64.7 1051.0,48.2 1108.0,103.6 1165.1,92.4 1222.1,92.4 1279.1,114.8 1336.1,120.4 1393.1,126.0 1450.2,153.7 1507.2,142.8 1564.2,148.4 1621.2,148.4 1678.2,136.9 1735.3,115.1 1792.3,136.9 1849.3,87.1 1906.3,87.1" fill="none" stroke="#ff8800" stroke-width="3.1" stroke-linejoin="miter" stroke-linecap="butt"/></svg>
<div style="left:810.9px;top:1488.8px;width:24.0px;height:24.0px;background:#fff;border:1.9px solid #c6c6c6;border-radius:50%;box-sizing:border-box"></div>
<svg style="left:815.8px;top:1493.7px" width="14.2" height="14.2" viewBox="0 0 24 24" ><path fill="#a9a9a9" d="M19.14,12.94c0.04-0.3,0.06-0.61,0.06-0.94c0-0.32-0.02-0.64-0.07-0.94l2.030-1.580c0.180-0.140,0.230-0.410,0.120-0.610 l-1.920-3.320c-0.120-0.220-0.370-0.290-0.590-0.220l-2.390,0.960c-0.500-0.380-1.030-0.700-1.620-0.940L14.400,2.810c-0.040-0.240-0.240-0.410-0.480-0.410 h-3.840c-0.240,0-0.430,0.170-0.470,0.410L9.250,5.350C8.660,5.590,8.120,5.920,7.630,6.290L5.240,5.330c-0.220-0.080-0.470,0-0.590,0.220L2.740,8.870 C2.620,9.080,2.660,9.340,2.860,9.480l2.030,1.580C4.840,11.360,4.800,11.690,4.800,12s0.020,0.640,0.070,0.940l-2.030,1.580 c-0.180,0.140-0.230,0.410-0.120,0.610l1.920,3.320c0.120,0.220,0.370,0.290,0.590,0.220l2.390-0.960c0.500,0.380,1.030,0.700,1.620,0.940l0.360,2.540 c0.050,0.240,0.240,0.410,0.480,0.410h3.840c0.240,0,0.440-0.170,0.470-0.410l0.360-2.540c0.590-0.240,1.130-0.560,1.620-0.940l2.390,0.960 c0.220,0.080,0.470,0,0.590-0.220l1.920-3.320c0.120-0.220,0.070-0.470-0.120-0.610L19.140,12.940z M12,15.600c-1.980,0-3.600-1.620-3.600-3.600 s1.620-3.600,3.600-3.600s3.600,1.620,3.600,3.600S13.980,15.600,12,15.600z"/></svg>
<div style="left:982.0px;top:1488.8px;width:24.0px;height:24.0px;background:#fff;border:1.9px solid #c6c6c6;border-radius:50%;box-sizing:border-box"></div>
<svg style="left:986.9px;top:1493.7px" width="14.2" height="14.2" viewBox="0 0 24 24" ><path fill="#a9a9a9" d="M19.14,12.94c0.04-0.3,0.06-0.61,0.06-0.94c0-0.32-0.02-0.64-0.07-0.94l2.030-1.580c0.180-0.140,0.230-0.410,0.120-0.610 l-1.920-3.320c-0.120-0.220-0.370-0.290-0.590-0.220l-2.390,0.960c-0.500-0.380-1.030-0.700-1.620-0.940L14.400,2.810c-0.040-0.240-0.240-0.410-0.480-0.410 h-3.840c-0.240,0-0.430,0.170-0.470,0.410L9.250,5.350C8.660,5.590,8.120,5.920,7.630,6.290L5.240,5.330c-0.220-0.080-0.470,0-0.590,0.220L2.740,8.870 C2.620,9.080,2.660,9.340,2.860,9.480l2.030,1.580C4.840,11.360,4.800,11.690,4.800,12s0.020,0.640,0.070,0.940l-2.030,1.580 c-0.180,0.140-0.230,0.410-0.120,0.610l1.920,3.320c0.120,0.220,0.370,0.290,0.590,0.220l2.390-0.960c0.500,0.380,1.030,0.700,1.620,0.940l0.360,2.540 c0.050,0.240,0.240,0.410,0.480,0.410h3.840c0.240,0,0.440-0.170,0.470-0.410l0.360-2.540c0.590-0.240,1.130-0.560,1.620-0.940l2.390,0.960 c0.220,0.080,0.470,0,0.590-0.220l1.920-3.320c0.120-0.220,0.070-0.470-0.120-0.610L19.140,12.940z M12,15.600c-1.980,0-3.600-1.620-3.600-3.600 s1.620-3.600,3.600-3.600s3.600,1.620,3.600,3.600S13.980,15.600,12,15.600z"/></svg>
<div style="left:28.0px;top:1562.9px;width:1988.5px;height:483.1px;background:#fff;box-shadow:0 -1px 0 #e3e4e7"></div>
<span class="t" id="t92" style="left:53.11px;top:1592.85px;font-size:23.1px;color:#333333;font-weight:700;letter-spacing:-0.173px">14 keywords</span>
<div style="left:215.3px;top:1585.6px;width:64.6px;height:35.3px;background:#c9c9c9;border-radius:18px"></div>
<div style="left:219.8px;top:1590.0px;width:26.4px;height:26.4px;background:#fff;border-radius:50%"></div>
<span class="t" id="t93" style="left:294.85px;top:1592.85px;font-size:23.1px;color:#333333;letter-spacing:0.166px">Multiple URLs only</span>
<div style="left:500.4px;top:1593.6px;width:19.2px;height:19.2px;background:#ababab;border-radius:50%"></div>
<span class="t" id="t94" style="left:504.88px;top:1596.56px;font-size:16px;color:#fff;font-weight:700;letter-spacing:0.000px">?</span>
<div style="left:1556.2px;top:1582.8px;width:162.9px;height:40.8px;border:1.7px solid #c5c5c5;border-radius:5.5px;background:#fff;box-sizing:border-box;"></div>
<svg style="left:1573.2px;top:1594.3px" width="22.6" height="19.0" viewBox="0 0 22.6 19" ><path fill="#333" fill-rule="evenodd" d="M1.800 0h19a1.800 1.800 0 0 1 1.800 1.800v15.400a1.800 1.800 0 0 1-1.800 1.800h-19a1.800 1.800 0 0 1-1.800-1.800v-15.400a1.800 1.800 0 0 1 1.800-1.800z M2.900 2.900v13.200h3.600V2.900z M9.500 2.900v13.200h3.600V2.900z M16.100 2.900v13.200h3.600V2.900z"/></svg>
<span class="t" id="t95" style="left:1608.55px;top:1592.75px;font-size:23.1px;color:#333333;letter-spacing:0.323px">Columns</span>
<div style="left:1732.9px;top:1582.8px;width:104.6px;height:40.8px;border:1.7px solid #c5c5c5;border-radius:5.5px;background:#fff;box-sizing:border-box;"></div>
<span class="t" id="t96" style="left:1749.77px;top:1591.22px;font-size:23.6px;color:#333333;font-weight:700;transform:scaleX(1.2190);letter-spacing:1.180px">{}</span>
<span class="t" id="t97" style="left:1786.00px;top:1592.75px;font-size:23.1px;color:#333333;letter-spacing:-0.553px">API</span>
<div style="left:1851.4px;top:1582.8px;width:138.7px;height:40.8px;border:1.7px solid #c5c5c5;border-radius:5.5px;background:#fff;box-sizing:border-box;"></div>
<svg style="left:1870.4px;top:1591.5px" width="19.8" height="23.0" viewBox="0 0 19.8 23" ><path fill="#333" fill-rule="evenodd" d="M2.500 0h10.300l7 7v13.500a2.500 2.500 0 0 1-2.500 2.500h-14.800a2.500 2.500 0 0 1-2.500-2.500v-18a2.500 2.500 0 0 1 2.500-2.500z M8.400 8.500v5.300h-3.200l4.700 5.200 4.700-5.200h-3.200v-5.300z"/></svg>
<span class="t" id="t98" style="left:1904.25px;top:1592.75px;font-size:23.1px;color:#333333;letter-spacing:0.353px">Export</span>
<div style="left:28.0px;top:1643.6px;width:1988.5px;height:2.0px;background:#eaeaea"></div>
<div style="left:54.2px;top:1661.3px;width:22.8px;height:22.8px;border:1.7px solid #c3c3c3;border-radius:5.5px;background:#fff;box-sizing:border-box"></div>
<span class="t" id="t99" style="left:88.53px;top:1661.97px;font-size:22.6px;color:#333333;font-weight:700;letter-spacing:-0.761px">Keyword</span>
<span class="t" id="t100" style="left:385.64px;top:1661.97px;font-size:22.6px;color:#333333;font-weight:700;transform:scaleX(0.9933);letter-spacing:-0.791px">Position</span>
<span class="t" id="t101" style="left:493.30px;top:1661.97px;font-size:22.6px;color:#333333;font-weight:700;letter-spacing:-0.790px">Change</span>
<span class="t" id="t102" style="left:598.17px;top:1661.97px;font-size:22.6px;color:#333333;font-weight:700;transform:scaleX(0.9990);letter-spacing:-0.791px">Tags</span>
<span class="t" id="t103" style="left:847.73px;top:1661.97px;font-size:22.6px;color:#333333;font-weight:700;letter-spacing:-0.479px">Intents</span>
<span class="t" id="t104" style="left:945.29px;top:1661.97px;font-size:22.6px;color:#333333;font-weight:700;transform:scaleX(0.9951);letter-spacing:-0.791px">Volume</span>
<span class="t" id="t105" style="left:1047.17px;top:1661.97px;font-size:22.6px;color:#333333;font-weight:700;letter-spacing:-0.516px">Traffic</span>
<span class="t" id="t106" style="left:1134.40px;top:1661.97px;font-size:22.6px;color:#333333;font-weight:700;letter-spacing:-0.790px">Change</span>
<span class="t" id="t107" style="left:1237.65px;top:1661.97px;font-size:22.6px;color:#333333;font-weight:700;transform:scaleX(0.9851);letter-spacing:-0.791px">KD</span>
<span class="t" id="t108" style="left:1302.90px;top:1661.97px;font-size:22.6px;color:#333333;font-weight:700;letter-spacing:-0.771px">Clicks</span>
<span class="t" id="t109" style="left:1407.92px;top:1661.97px;font-size:22.6px;color:#333333;font-weight:700;transform:scaleX(0.9686);letter-spacing:-0.791px">CPC</span>
<span class="t" id="t110" style="left:1482.44px;top:1661.97px;font-size:22.6px;color:#333333;font-weight:700;transform:scaleX(0.9549);letter-spacing:-0.791px">CPS</span>
<span class="t" id="t111" style="left:1550.46px;top:1661.97px;font-size:22.6px;color:#333333;font-weight:700;transform:scaleX(0.9567);letter-spacing:-0.791px">ST</span>
<span class="t" id="t112" style="left:1653.44px;top:1661.97px;font-size:22.6px;color:#333333;font-weight:700;transform:scaleX(0.9967);letter-spacing:-0.791px">Parent Topic</span>
<span class="t" id="t113" style="left:1896.49px;top:1661.97px;font-size:22.6px;color:#333333;font-weight:700;transform:scaleX(0.9023);letter-spacing:-0.791px">SF</span>
<svg style="left:1117.5px;top:1670.2px" width="11.6" height="7.8" viewBox="0 0 11.6 7.8" ><path d="M0 0 H11.600 L5.800 7.800Z" fill="#333"/></svg>
<div style="left:28.0px;top:1699.7px;width:1988.5px;height:2.0px;background:#eaeaea"></div>
<div style="left:54.2px;top:1718.0px;width:22.8px;height:22.8px;border:1.7px solid #c3c3c3;border-radius:5.5px;background:#fff;box-sizing:border-box"></div>
<svg style="left:92.0px;top:1719.0px" width="26.0" height="22.0" viewBox="0 0 26 22" ><path d="M2.400 12 L8 17.600 L22 3.500" fill="none" stroke="#a8a8a8" stroke-width="3.400"/></svg>
<span class="t" id="t114" style="left:131.28px;top:1718.45px;font-size:23.1px;color:#1152ab;letter-spacing:0.335px">open graph tags</span>
<span class="t" id="t115" style="left:394.99px;top:1718.45px;font-size:23.1px;color:#737373;letter-spacing:0.000px">3</span>
<svg style="left:420.2px;top:1722.3px" width="14.0" height="12.0" viewBox="0 0 14 12" ><path d="M0 6 H12.300 M8.600 2.300 L12.500 6 L8.600 9.700" fill="none" stroke="#a3a3a3" stroke-width="1.500"/></svg>
<span class="t" id="t116" style="left:447.39px;top:1718.45px;font-size:23.1px;color:#333333;transform:scaleX(0.7000);letter-spacing:0.000px">1</span>
<svg style="left:542.1px;top:1726.3px" width="13.2" height="8.2" viewBox="0 0 13.2 8.2" ><path d="M0 8.200 L6.600 0 L13.200 8.200Z" fill="#1a994e"/></svg>
<span class="t" id="t117" style="left:558.45px;top:1719.95px;font-size:23.1px;color:#1a994e;letter-spacing:0.000px">2</span>
<div style="left:598.4px;top:1715.0px;width:71.1px;height:28.7px;background:#ebebeb;border-radius:5px"></div>
<span class="t" id="t118" style="left:603.36px;top:1719.15px;font-size:20.5px;color:#333333;letter-spacing:0.333px">Michal</span>
<div style="left:675.9px;top:1715.0px;width:139.1px;height:28.7px;background:#ebebeb;border-radius:5px"></div>
<span class="t" id="t119" style="left:682.29px;top:1719.15px;font-size:20.5px;color:#333333;letter-spacing:-0.079px">seo campaign</span>
<div style="left:849.2px;top:1715.0px;width:28.7px;height:28.7px;background:#c9dff6;border-radius:5px"></div>
<span class="t" id="t120" style="left:860.29px;top:1720.42px;font-size:19px;color:#3b4a5e;letter-spacing:0.000px">I</span>
<span class="t" id="t121" style="left:982.03px;top:1718.45px;font-size:23.1px;color:#333333;transform:scaleX(1.0265);letter-spacing:1.155px">900</span>
<span class="t" id="t122" style="left:1071.47px;top:1718.45px;font-size:23.1px;color:#333333;letter-spacing:-0.316px">192</span>
<span class="t" id="t123" style="left:1177.08px;top:1718.45px;font-size:23.1px;color:#1a994e;transform:scaleX(0.9784);letter-spacing:-0.809px">+21</span>
<div style="left:1239.0px;top:1711.7px;width:38.4px;height:34.9px;background:#ffc57e;border-radius:5px"></div>
<span class="t" id="t124" style="left:1244.51px;top:1718.45px;font-size:23.1px;color:#333333;transform:scaleX(1.0316);letter-spacing:1.155px">62</span>
<span class="t" id="t125" style="left:1323.86px;top:1718.45px;font-size:23.1px;color:#333333;transform:scaleX(1.0163);letter-spacing:1.155px">853</span>
<span class="t" id="t126" style="left:1391.87px;top:1718.45px;font-size:23.1px;color:#333333;letter-spacing:0.721px">$0.03</span>
<span class="t" id="t127" style="left:1478.19px;top:1718.45px;font-size:23.1px;color:#333333;letter-spacing:0.635px">0.95</span>
<div style="left:1551.0px;top:1724.3px;width:77.3px;height:9.9px;background:#3083dc"></div>
<span class="t" id="t128" style="left:1653.98px;top:1718.45px;font-size:23.1px;color:#1152ab;letter-spacing:0.475px">open graph</span>
<div style="left:1896.2px;top:1711.6px;width:35.6px;height:35.6px;background:#ebebeb;border-radius:50%"></div>
<span class="t" id="t129" style="left:1907.08px;top:1718.45px;font-size:23.1px;color:#333333;letter-spacing:0.000px">5</span>
<div style="left:1958.0px;top:1711.9px;width:82.0px;height:34.6px;border:1.7px solid #c8c8c8;border-radius:5.5px;background:#fff;box-sizing:border-box"></div>
<svg style="left:1972.0px;top:1719.0px" width="23.0" height="20.0" viewBox="0 0 23 20" ><path d="M1.600 16.700 L8.800 8.200 L14.800 14.200 L21.100 3.800" fill="none" stroke="#333" stroke-width="3.3" stroke-linejoin="miter"/></svg>
<svg style="left:2003.6px;top:1725.2px" width="14.2" height="9.1" viewBox="0 0 14.200000000000045 9.100000000000023" ><path d="M2 2 L7.10 7.10 L12.20 2" fill="none" stroke="#333333" stroke-width="1.9" stroke-linecap="butt" stroke-linejoin="miter"/></svg>
<div style="left:54.5px;top:1901.6px;width:1962.0px;height:2.0px;background:#eaeaea"></div>
<div style="left:54.2px;top:1919.6px;width:22.8px;height:22.8px;border:1.7px solid #c3c3c3;border-radius:5.5px;background:#fff;box-sizing:border-box"></div>
<svg style="left:92.0px;top:1920.6px" width="26.0" height="22.0" viewBox="0 0 26 22" ><path d="M2.400 12 L8 17.600 L22 3.500" fill="none" stroke="#a8a8a8" stroke-width="3.400"/></svg>
<span class="t" id="t130" style="left:131.62px;top:1920.05px;font-size:23.1px;color:#1152ab;letter-spacing:0.594px">seo copywriting</span>
<span class="t" id="t131" style="left:394.65px;top:1920.05px;font-size:23.1px;color:#737373;letter-spacing:0.000px">6</span>
<svg style="left:420.2px;top:1923.9px" width="14.0" height="12.0" viewBox="0 0 14 12" ><path d="M0 6 H12.300 M8.600 2.300 L12.500 6 L8.600 9.700" fill="none" stroke="#a3a3a3" stroke-width="1.500"/></svg>
<span class="t" id="t132" style="left:447.39px;top:1920.05px;font-size:23.1px;color:#333333;transform:scaleX(0.7000);letter-spacing:0.000px">1</span>
<svg style="left:542.1px;top:1927.9px" width="13.2" height="8.2" viewBox="0 0 13.2 8.2" ><path d="M0 8.200 L6.600 0 L13.200 8.200Z" fill="#1a994e"/></svg>
<span class="t" id="t133" style="left:558.68px;top:1921.55px;font-size:23.1px;color:#1a994e;letter-spacing:0.000px">5</span>
<div style="left:598.4px;top:1916.6px;width:38.8px;height:28.7px;background:#ebebeb;border-radius:5px"></div>
<span class="t" id="t134" style="left:604.12px;top:1920.75px;font-size:20.5px;color:#333333;transform:scaleX(0.9517);letter-spacing:-0.718px">SQ</span>
<div style="left:644.0px;top:1916.6px;width:66.0px;height:28.7px;background:#ebebeb;border-radius:5px"></div>
<span class="t" id="t135" style="left:650.29px;top:1920.75px;font-size:20.5px;color:#333333;letter-spacing:0.135px">surfer</span>
<div style="left:849.2px;top:1916.6px;width:28.7px;height:28.7px;background:#c9dff6;border-radius:5px"></div>
<span class="t" id="t136" style="left:860.29px;top:1922.02px;font-size:19px;color:#3b4a5e;letter-spacing:0.000px">I</span>
<span class="t" id="t137" style="left:976.68px;top:1920.05px;font-size:23.1px;color:#333333;letter-spacing:-0.310px">5.8K</span>
<span class="t" id="t138" style="left:1071.37px;top:1920.05px;font-size:23.1px;color:#333333;letter-spacing:-0.266px">162</span>
<span class="t" id="t139" style="left:1162.86px;top:1920.05px;font-size:23.1px;color:#df1f1f;letter-spacing:-0.342px">−152</span>
<div style="left:1239.0px;top:1913.3px;width:38.4px;height:34.9px;background:#ffd37e;border-radius:5px"></div>
<span class="t" id="t140" style="left:1244.76px;top:1920.05px;font-size:23.1px;color:#333333;transform:scaleX(1.0221);letter-spacing:1.155px">59</span>
<span class="t" id="t141" style="left:1318.34px;top:1920.05px;font-size:23.1px;color:#333333;letter-spacing:-0.430px">4.7K</span>
<span class="t" id="t142" style="left:1391.87px;top:1920.05px;font-size:23.1px;color:#333333;letter-spacing:0.721px">$2.28</span>
<span class="t" id="t143" style="left:1478.19px;top:1920.05px;font-size:23.1px;color:#333333;letter-spacing:0.674px">0.82</span>
<div style="left:1551.0px;top:1925.9px;width:77.3px;height:9.9px;background:#3083dc"></div>
<span class="t" id="t144" style="left:1654.32px;top:1920.05px;font-size:23.1px;color:#1152ab;letter-spacing:0.601px">seo copywriting</span>
<div style="left:1896.2px;top:1913.2px;width:35.6px;height:35.6px;background:#ebebeb;border-radius:50%"></div>
<span class="t" id="t145" style="left:1907.08px;top:1920.05px;font-size:23.1px;color:#333333;letter-spacing:0.000px">5</span>
<div style="left:1958.0px;top:1913.5px;width:82.0px;height:34.6px;border:1.7px solid #c8c8c8;border-radius:5.5px;background:#fff;box-sizing:border-box"></div>
<svg style="left:1972.0px;top:1920.6px" width="23.0" height="20.0" viewBox="0 0 23 20" ><path d="M1.600 16.700 L8.800 8.200 L14.800 14.200 L21.100 3.800" fill="none" stroke="#333" stroke-width="3.3" stroke-linejoin="miter"/></svg>
<svg style="left:2003.6px;top:1926.8px" width="14.2" height="9.1" viewBox="0 0 14.200000000000045 9.100000000000023" ><path d="M2 2 L7.10 7.10 L12.20 2" fill="none" stroke="#333333" stroke-width="1.9" stroke-linecap="butt" stroke-linejoin="miter"/></svg>
<div style="left:2016.5px;top:1562.7px;width:25.5px;height:483.3px;background:#ebecef"></div>
<div style="left:2042.0px;top:0.0px;width:2.0px;height:2048.0px;background:#fff"></div>
</div></body></html>
